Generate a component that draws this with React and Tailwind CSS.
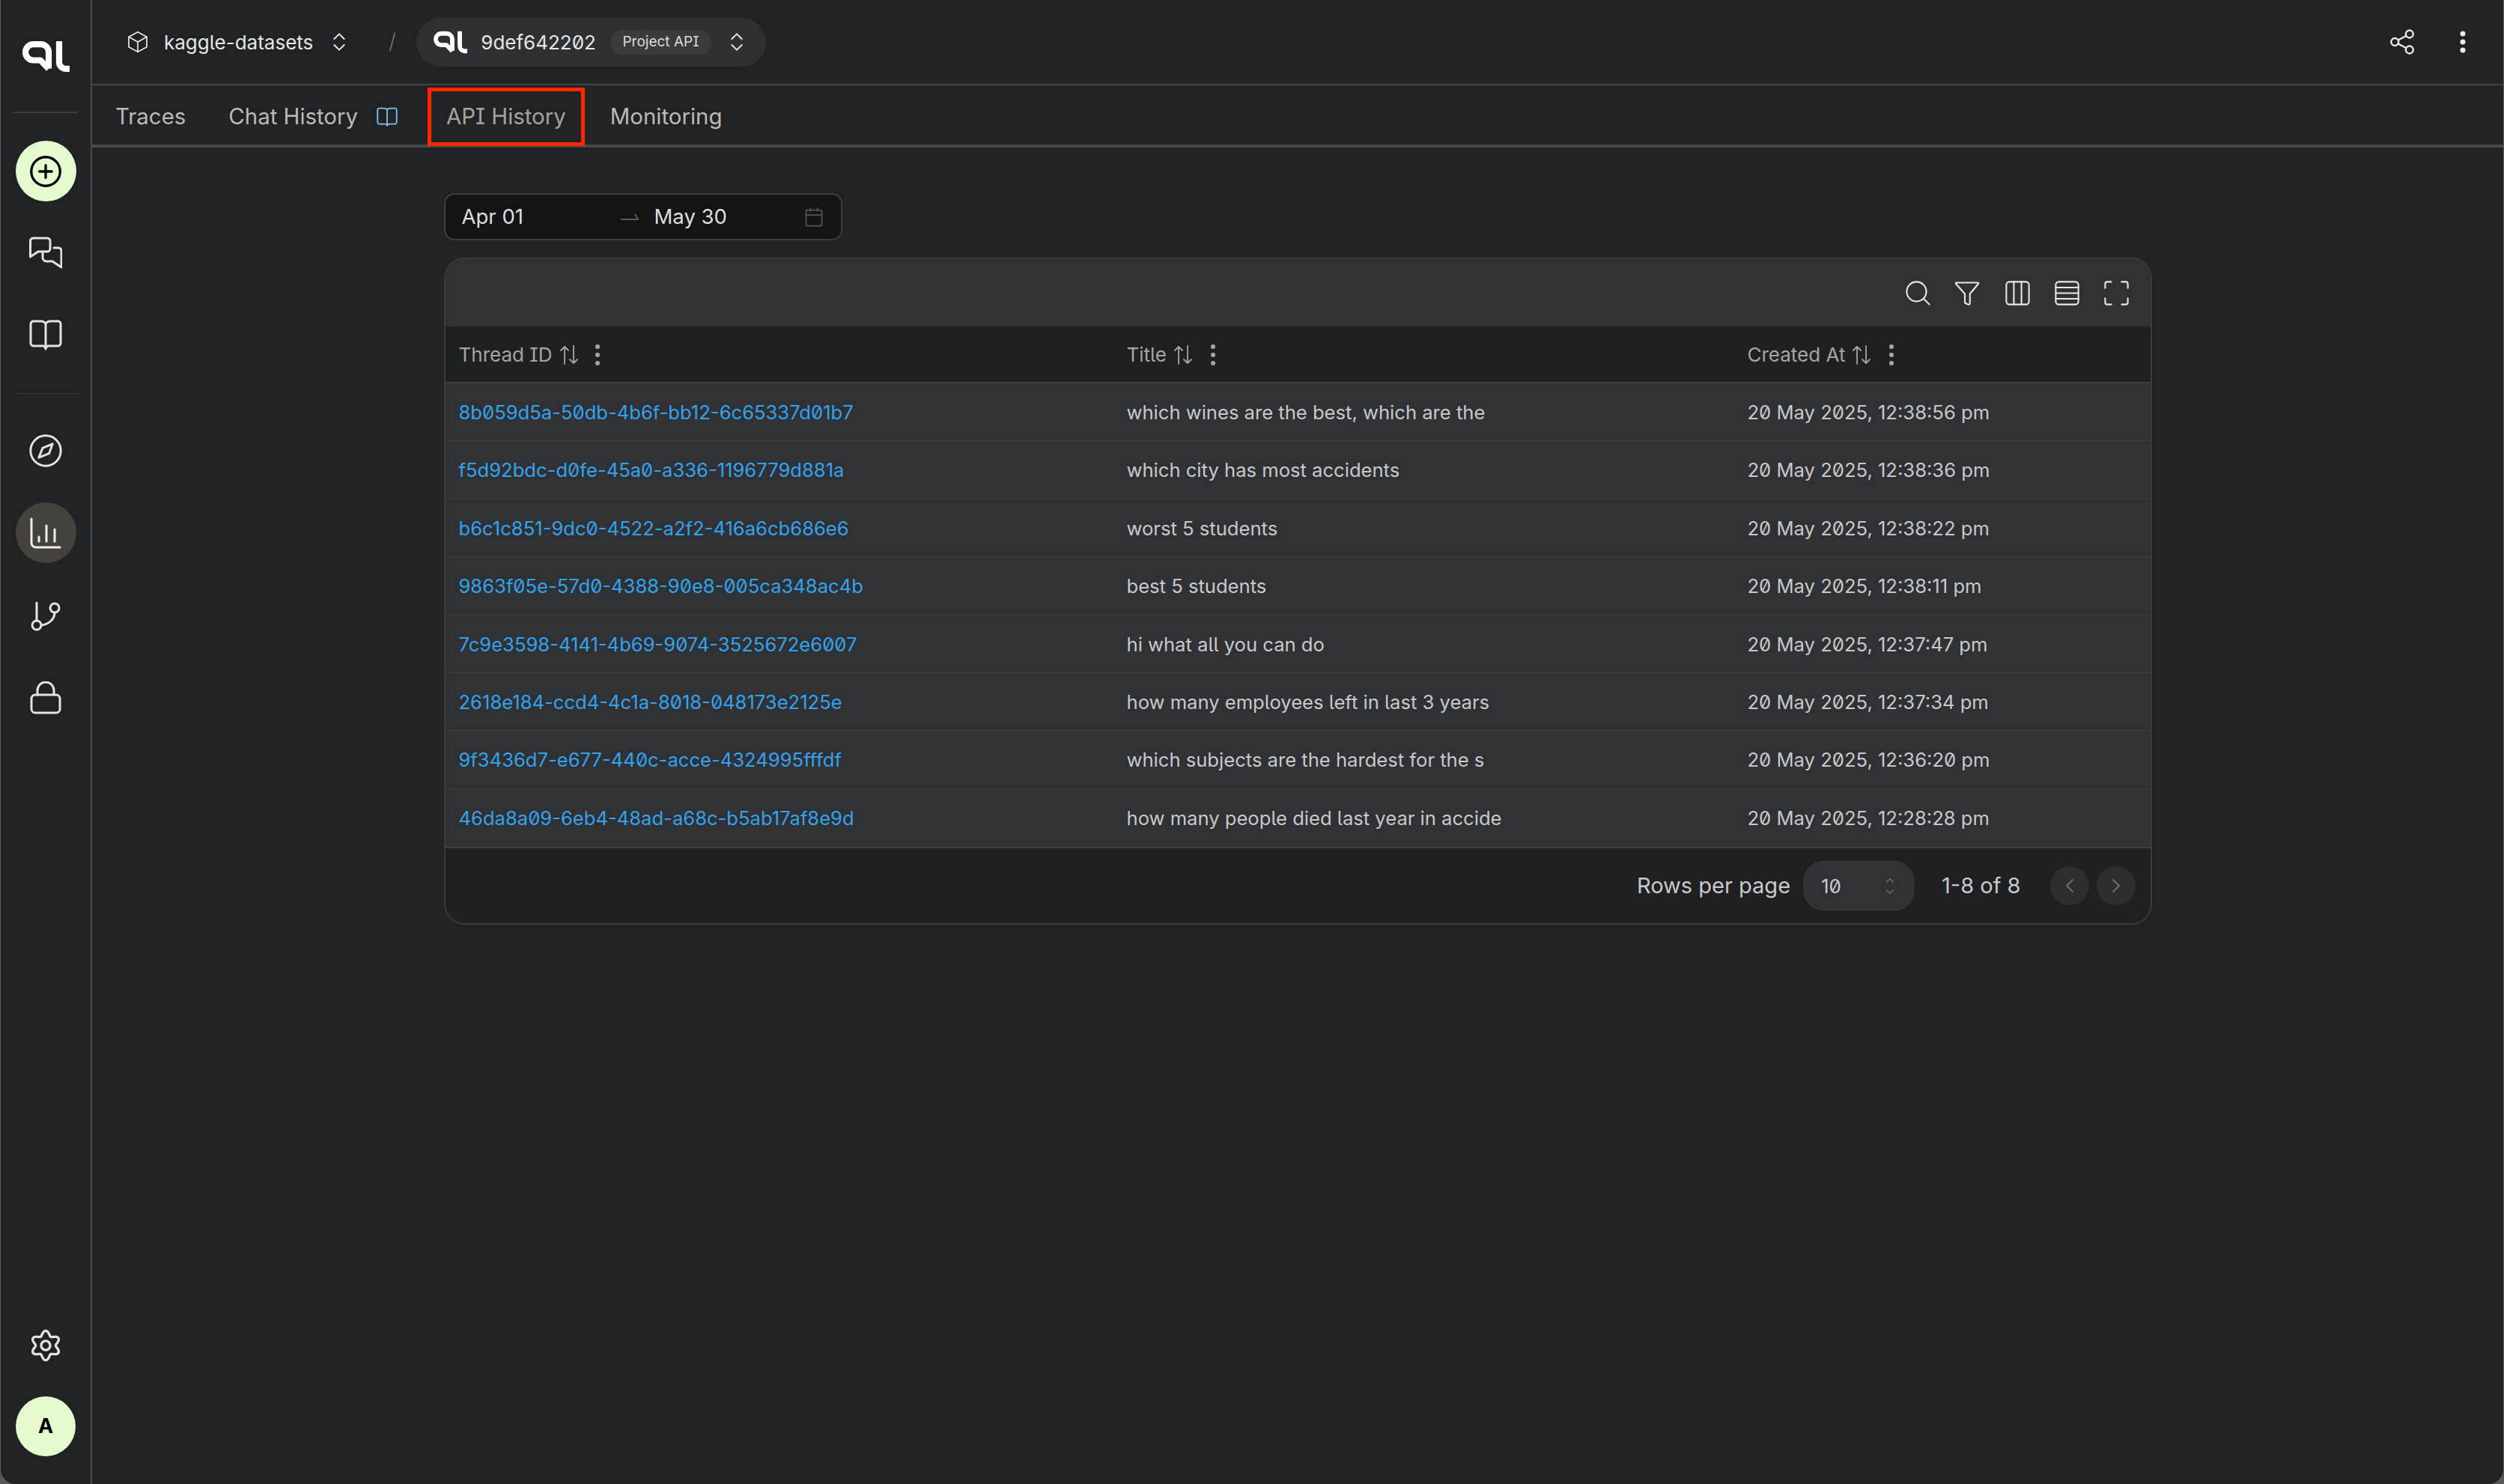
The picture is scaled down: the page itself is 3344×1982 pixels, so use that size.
import React from "react";
import { ChevronsUpDown, ChevronLeft, ChevronRight, ChevronUp, ChevronDown } from "lucide-react";

const rows = [
  ["8b059d5a-50db-4b6f-bb12-6c65337d01b7", "which wines are the best, which are the", "20 May 2025, 12:38:56 pm"],
  ["f5d92bdc-d0fe-45a0-a336-1196779d881a", "which city has most accidents", "20 May 2025, 12:38:36 pm"],
  ["b6c1c851-9dc0-4522-a2f2-416a6cb686e6", "worst 5 students", "20 May 2025, 12:38:22 pm"],
  ["9863f05e-57d0-4388-90e8-005ca348ac4b", "best 5 students", "20 May 2025, 12:38:11 pm"],
  ["7c9e3598-4141-4b69-9074-3525672e6007", "hi what all you can do", "20 May 2025, 12:37:47 pm"],
  ["2618e184-ccd4-4c1a-8018-048173e2125e", "how many employees left in last 3 years", "20 May 2025, 12:37:34 pm"],
  ["9f3436d7-e677-440c-acce-4324995fffdf", "which subjects are the hardest for the s", "20 May 2025, 12:36:20 pm"],
  ["46da8a09-6eb4-48ad-a68c-b5ab17af8e9d", "how many people died last year in accide", "20 May 2025, 12:28:28 pm"],
];

const Ic = ({ size = 44, sw = 2, children, className = "", vb = 24 }) => (
  <svg width={size} height={size} viewBox={`0 0 ${vb} ${vb}`} fill="none" stroke="currentColor" strokeWidth={sw} strokeLinecap="round" strokeLinejoin="round" className={className}>
    {children}
  </svg>
);

const Logo = ({ className = "" }) => (
  <svg viewBox="0 0 63 41" fill="none" stroke="currentColor" strokeWidth="8.2" className={className}>
    <path d="M35 36.500V14.500A10.500 10.500 0 0 0 24.500 4.100H14.500A10.500 10.500 0 0 0 4.100 14.500V15A10.500 10.500 0 0 0 14.500 25.500H24L35 37" strokeLinejoin="round" />
    <path d="M49 0V27.500A9 9 0 0 0 58 36.900H63" />
  </svg>
);

const BookIcon = ({ size = 44, sw = 3 }) => (
  <Ic size={size} sw={sw} vb={44}>
    <path d="M22 7C20.500 5.300 18.500 4 16 4H5.500C3.800 4 2 5.500 2 7.500V33.500C2 35.300 3.800 37 5.500 37H18.500C20 37 21.300 38 22 41C22.700 38 24 37 25.500 37H38.500C40.200 37 42 35.300 42 33.500V7.500C42 5.500 40.200 4 38.500 4H28C25.500 4 23.500 5.300 22 7ZM22 7V41" />
  </Ic>
);

const gearPath = (() => {
  const pts = [];
  for (let i = 0; i < 120; i++) {
    const t = (i / 120) * Math.PI * 2;
    const r = 9 + 1.7 * Math.cos(6 * t);
    pts.push(`${(12 + r * Math.sin(t)).toFixed(2)} ${(12 - r * Math.cos(t)).toFixed(2)}`);
  }
  return `M${pts.join("L")}Z`;
})();

const Kebab = ({ className = "" }) => (
  <svg width="10" height="28" viewBox="0 0 10 28" className={className} fill="currentColor">
    <circle cx="5" cy="3" r="3" />
    <circle cx="5" cy="14" r="3" />
    <circle cx="5" cy="25" r="3" />
  </svg>
);

const Sort = () => (
  <svg width="26" height="26" viewBox="0 0 26 26" fill="none" stroke="currentColor" strokeWidth="1.800" strokeLinecap="round" strokeLinejoin="round">
    <path d="M7 25V2M2 7L7 2L12 7M19 1V24M14 19L19 24L24 19" />
  </svg>
);

const Head = ({ label, w, pad = "pl-[19px]", kg = "ml-[22px]" }) => (
  <div className={`${w} flex items-center ${pad} text-[#a9a5a0]`}>
    <span>{label}</span>
    <span className="ml-[9px] flex"><Sort /></span>
    <span className={`${kg} flex`}><Kebab /></span>
  </div>
);

const NavItem = ({ children, className = "text-[#e3e3e3]" }) => (
  <div className={`flex h-[81px] w-[81px] items-center justify-center rounded-full ${className}`}>{children}</div>
);

export default function App() {
  return (
    <div className="h-[1982px] w-[3344px] overflow-hidden bg-[#55575a] pl-px pr-px [font-family:Inter,sans-serif] [font-feature-settings:'ss02','zero']">
      <div className="flex h-full w-full overflow-hidden rounded-bl-[20px] rounded-br-[20px] bg-[#202224]">
        <aside className="flex h-full w-[122px] shrink-0 flex-col items-center border-r-2 border-[#48494c] pb-[37px]">
          <div className="flex h-[151px] w-[86px] shrink-0 items-center justify-center border-b-2 border-[#3c3d3f] pt-[1px] text-white">
            <Logo className="h-[41px] w-[63px]" />
          </div>
          <div className="mt-[37px] flex flex-col items-center gap-[28px]">
            <NavItem className="bg-[#e4fbcf] text-black">
              <Ic size={44} sw={1.800}>
                <circle cx="12" cy="12" r="10.500" />
                <path d="M12 7.500V16.500M7.500 12H16.500" />
              </Ic>
            </NavItem>
            <NavItem>
              <Ic size={44} sw={3} vb={44}>
                <path d="M1.500 27V6A4 4 0 0 1 5.500 2H24A4 4 0 0 1 28 6V16A4 4 0 0 1 24 20H12Z" />
                <path d="M18 22V28A5 5 0 0 0 23 33H31L43 41V19A4 4 0 0 0 39 15H33" />
              </Ic>
            </NavItem>
            <NavItem><BookIcon /></NavItem>
          </div>
          <div className="mt-[38px] h-px w-[86px] shrink-0 bg-[#3c3d3f]" />
          <div className="mt-[35px] flex flex-col items-center gap-[29px]">
            <NavItem>
              <Ic size={44} sw={1.600}>
                <circle cx="12" cy="12" r="11" />
                <path d="M17 7L14.500 14L7 17L9.800 10Z" />
              </Ic>
            </NavItem>
            <NavItem className="bg-[#45423e] text-[#f0f0f0]">
              <Ic size={44} sw={3} vb={44}>
                <path d="M3 3V35A6 6 0 0 0 9 41H41" />
                <path d="M13 27V33M23 12V33M34 17V33" />
              </Ic>
            </NavItem>
            <NavItem>
              <Ic size={44} sw={3} vb={44}>
                <path d="M10 5V29" />
                <circle cx="10" cy="35" r="6" />
                <circle cx="34" cy="12" r="6" />
                <path d="M16 35C26 34 34 27 34 18" />
              </Ic>
            </NavItem>
            <NavItem>
              <Ic size={44} sw={3} vb={44}>
                <rect x="3" y="18" width="38" height="24" rx="5" />
                <path d="M11 18V12A11 11 0 0 1 33 12V18" />
              </Ic>
            </NavItem>
          </div>
          <div className="mt-auto flex flex-col items-center gap-[28px]">
            <NavItem>
              <Ic size={44} sw={1.800}>
                <path d={gearPath} />
                <circle cx="12" cy="12" r="3.300" />
              </Ic>
            </NavItem>
            <div className="flex h-[80px] w-[80px] items-center justify-center rounded-full bg-[#e4fbcf] text-[27px] font-bold text-black">A</div>
          </div>
        </aside>

        <div className="flex min-w-0 flex-1 flex-col">
          <header className="flex h-[114px] shrink-0 items-center border-b-2 border-[#424345] pl-[45px] pr-[50px]">
            <div className="flex items-center text-[26px] text-[#e6e6e6]">
              <Ic size={32} sw={1.300}>
                <path d="M12 2L21 7V17L12 22L3 17V7Z" />
                <path d="M3 7L12 12L21 7M12 12V22" />
              </Ic>
              <span className="ml-[19px]">kaggle-datasets</span>
              <ChevronsUpDown size={32} strokeWidth={1.500} className="ml-[19px]" />
            </div>
            <div className="ml-[54px] h-[26px] w-[2px] rotate-[15deg] bg-[#6a6b6d]" />
            <div className="ml-[31px] flex h-[65px] w-[467px] items-center rounded-full bg-[#2f3031] pl-[23px] text-white">
              <Logo className="h-[31px] w-[45px]" />
              <span className="ml-[18px] text-[26px] text-[#e6e6e6]">9def642202</span>
              <span className="ml-[19px] flex h-[33px] w-[135px] items-center justify-center rounded-full bg-[#3b3b3c] text-[19px] text-[#dcdcdc]">Project API</span>
              <ChevronsUpDown size={32} strokeWidth={1.500} className="ml-[18px] text-[#e6e6e6]" />
            </div>
            <div className="ml-auto flex items-center gap-[59px] text-[#ececec]">
              <Ic size={36} sw={1.600}>
                <circle cx="18.500" cy="5" r="3.300" />
                <circle cx="5.500" cy="12" r="3.300" />
                <circle cx="18.500" cy="19" r="3.300" />
                <path d="M8.500 10.300L15.500 6.700M8.500 13.700L15.500 17.300" />
              </Ic>
              <svg width="8" height="30" viewBox="0 0 8 30" fill="currentColor">
                <circle cx="4" cy="4" r="3.500" />
                <circle cx="4" cy="15" r="3.500" />
                <circle cx="4" cy="26" r="3.500" />
              </svg>
            </div>
          </header>

          <nav className="flex h-[83px] shrink-0 items-center border-b-4 border-[#46484a] pl-[31px] pt-[5px] text-[29.400px] text-[#bdbab6]">
            <span>Traces</span>
            <span className="ml-[57px]">Chat History</span>
            <span className="ml-[25px] flex text-[#7dc4f5]">
              <BookIcon size={28} sw={2.800} />
            </span>
            <span className="relative ml-[65px] text-[#a8a29e]">
              API History
              <span className="absolute -inset-x-[25px] -inset-y-[17px] border-[5px] border-[#ff2600]" />
            </span>
            <span className="ml-[59px]">Monitoring</span>
          </nav>

          <main className="mx-auto flex w-[2281px] flex-col pt-[61px]">
            <div className="flex h-[63px] w-[532px] items-center rounded-[14px] border-2 border-[#3e3f42] bg-[#141415] pl-[22px] text-[27.500px] text-[#dedede] [font-feature-settings:normal]">
              <span className="w-[212px]">Apr 01</span>
              <svg width="24" height="10" viewBox="0 0 24 10" fill="none" stroke="#58595b" strokeWidth="2" className="shrink-0">
                <path d="M0 8H23L19 1" />
              </svg>
              <span className="ml-[21px]">May 30</span>
              <span className="ml-auto mr-[22px] flex text-[#55565a]">
                <Ic size={28} sw={1.500}>
                  <rect x="3" y="4" width="18" height="18" rx="1" />
                  <path d="M3 9.500H21M8 1.500V5M16 1.500V5" />
                </Ic>
              </span>
            </div>

            <div className="mt-[23px] w-full overflow-hidden rounded-[28px] border-2 border-[#3a3b3e] bg-[#1f2022]">
              <div className="flex h-[90px] items-center justify-end gap-[33px] bg-[#303135] pr-[29px] text-[#e8e8e8]">
                <Ic size={33} sw={1.500} className="-mr-[2px]">
                  <circle cx="10.500" cy="10.500" r="9.500" />
                  <path d="M17.500 17.500L23 23" />
                </Ic>
                <Ic size={36} sw={1.400}>
                  <path d="M2.500 3H21.500C22 3 22.300 3.600 22 4L14.500 13V21.500C14.500 22.500 13 22.800 12 22L10 21V13L2 4C1.700 3.600 2 3 2.500 3Z" />
                </Ic>
                <Ic size={33} sw={1.500}>
                  <rect x="1" y="1" width="22" height="22" rx="3" />
                  <path d="M8.300 1V23M15.700 1V23" />
                </Ic>
                <Ic size={33} sw={1.500}>
                  <rect x="1" y="1" width="22" height="22" rx="3" />
                  <path d="M1 6.500H23M1 12H23M1 17.500H23" />
                </Ic>
                <Ic size={33} sw={1.500}>
                  <path d="M1 7V3A2 2 0 0 1 3 1H7M17 1H21A2 2 0 0 1 23 3V7M23 17V21A2 2 0 0 1 21 23H17M7 23H3A2 2 0 0 1 1 21V17" />
                </Ic>
              </div>

              <div className="flex h-[76px] items-center border-b-2 border-[#3d3e41] bg-[#1f2022] pt-[1px] text-[26px]">
                <Head label="Thread ID" w="w-[891px]" pad="pl-[18px]" kg="ml-[20px]" />
                <Head label="Title" w="w-[829px]" />
                <Head label="Created At" w="flex-1" />
              </div>

              <div className="bg-[#2f3135]">
                {rows.map((r, i) => (
                  <div key={r[0]} className={`flex h-[77.400px] items-center pt-[2px] text-[25.600px] text-[#c9c9c9] ${i < rows.length - 1 ? "border-b border-[#414245]" : ""}`}>
                    <div className="w-[891px] pl-[18px] text-[#34a3ee]">{r[0]}</div>
                    <div className="w-[829px] pl-[19px]">{r[1]}</div>
                    <div className="flex-1 pl-[19px]">{r[2]}</div>
                  </div>
                ))}
              </div>

              <div className="flex h-[102px] items-center justify-end border-t-2 border-[#3f4043] pr-[20px] text-[29px] text-[#c9c9c9]">
                <span>Rows per page</span>
                <div className="ml-[18px] flex h-[66px] w-[147px] items-center justify-between rounded-[26px] border border-[#3f4043] bg-[#2f3135] pl-[22px] pr-[22px] text-[26px]">
                  <span>10</span>
                  <span className="flex flex-col items-center text-[#6e6f72]">
                    <ChevronUp size={18} strokeWidth={2} className="-mb-[3px]" />
                    <ChevronDown size={18} strokeWidth={2} />
                  </span>
                </div>
                <span className="ml-[37px]">1-8 of 8</span>
                <div className="ml-[39px] flex h-[52px] w-[52px] items-center justify-center rounded-full bg-[#2d2e30] text-[#6c6d6f]"><ChevronLeft size={32} strokeWidth={1.600} /></div>
                <div className="ml-[10px] flex h-[52px] w-[52px] items-center justify-center rounded-full bg-[#2d2e30] text-[#6c6d6f]"><ChevronRight size={32} strokeWidth={1.600} /></div>
              </div>
            </div>
          </main>
        </div>
      </div>
    </div>
  );
}
